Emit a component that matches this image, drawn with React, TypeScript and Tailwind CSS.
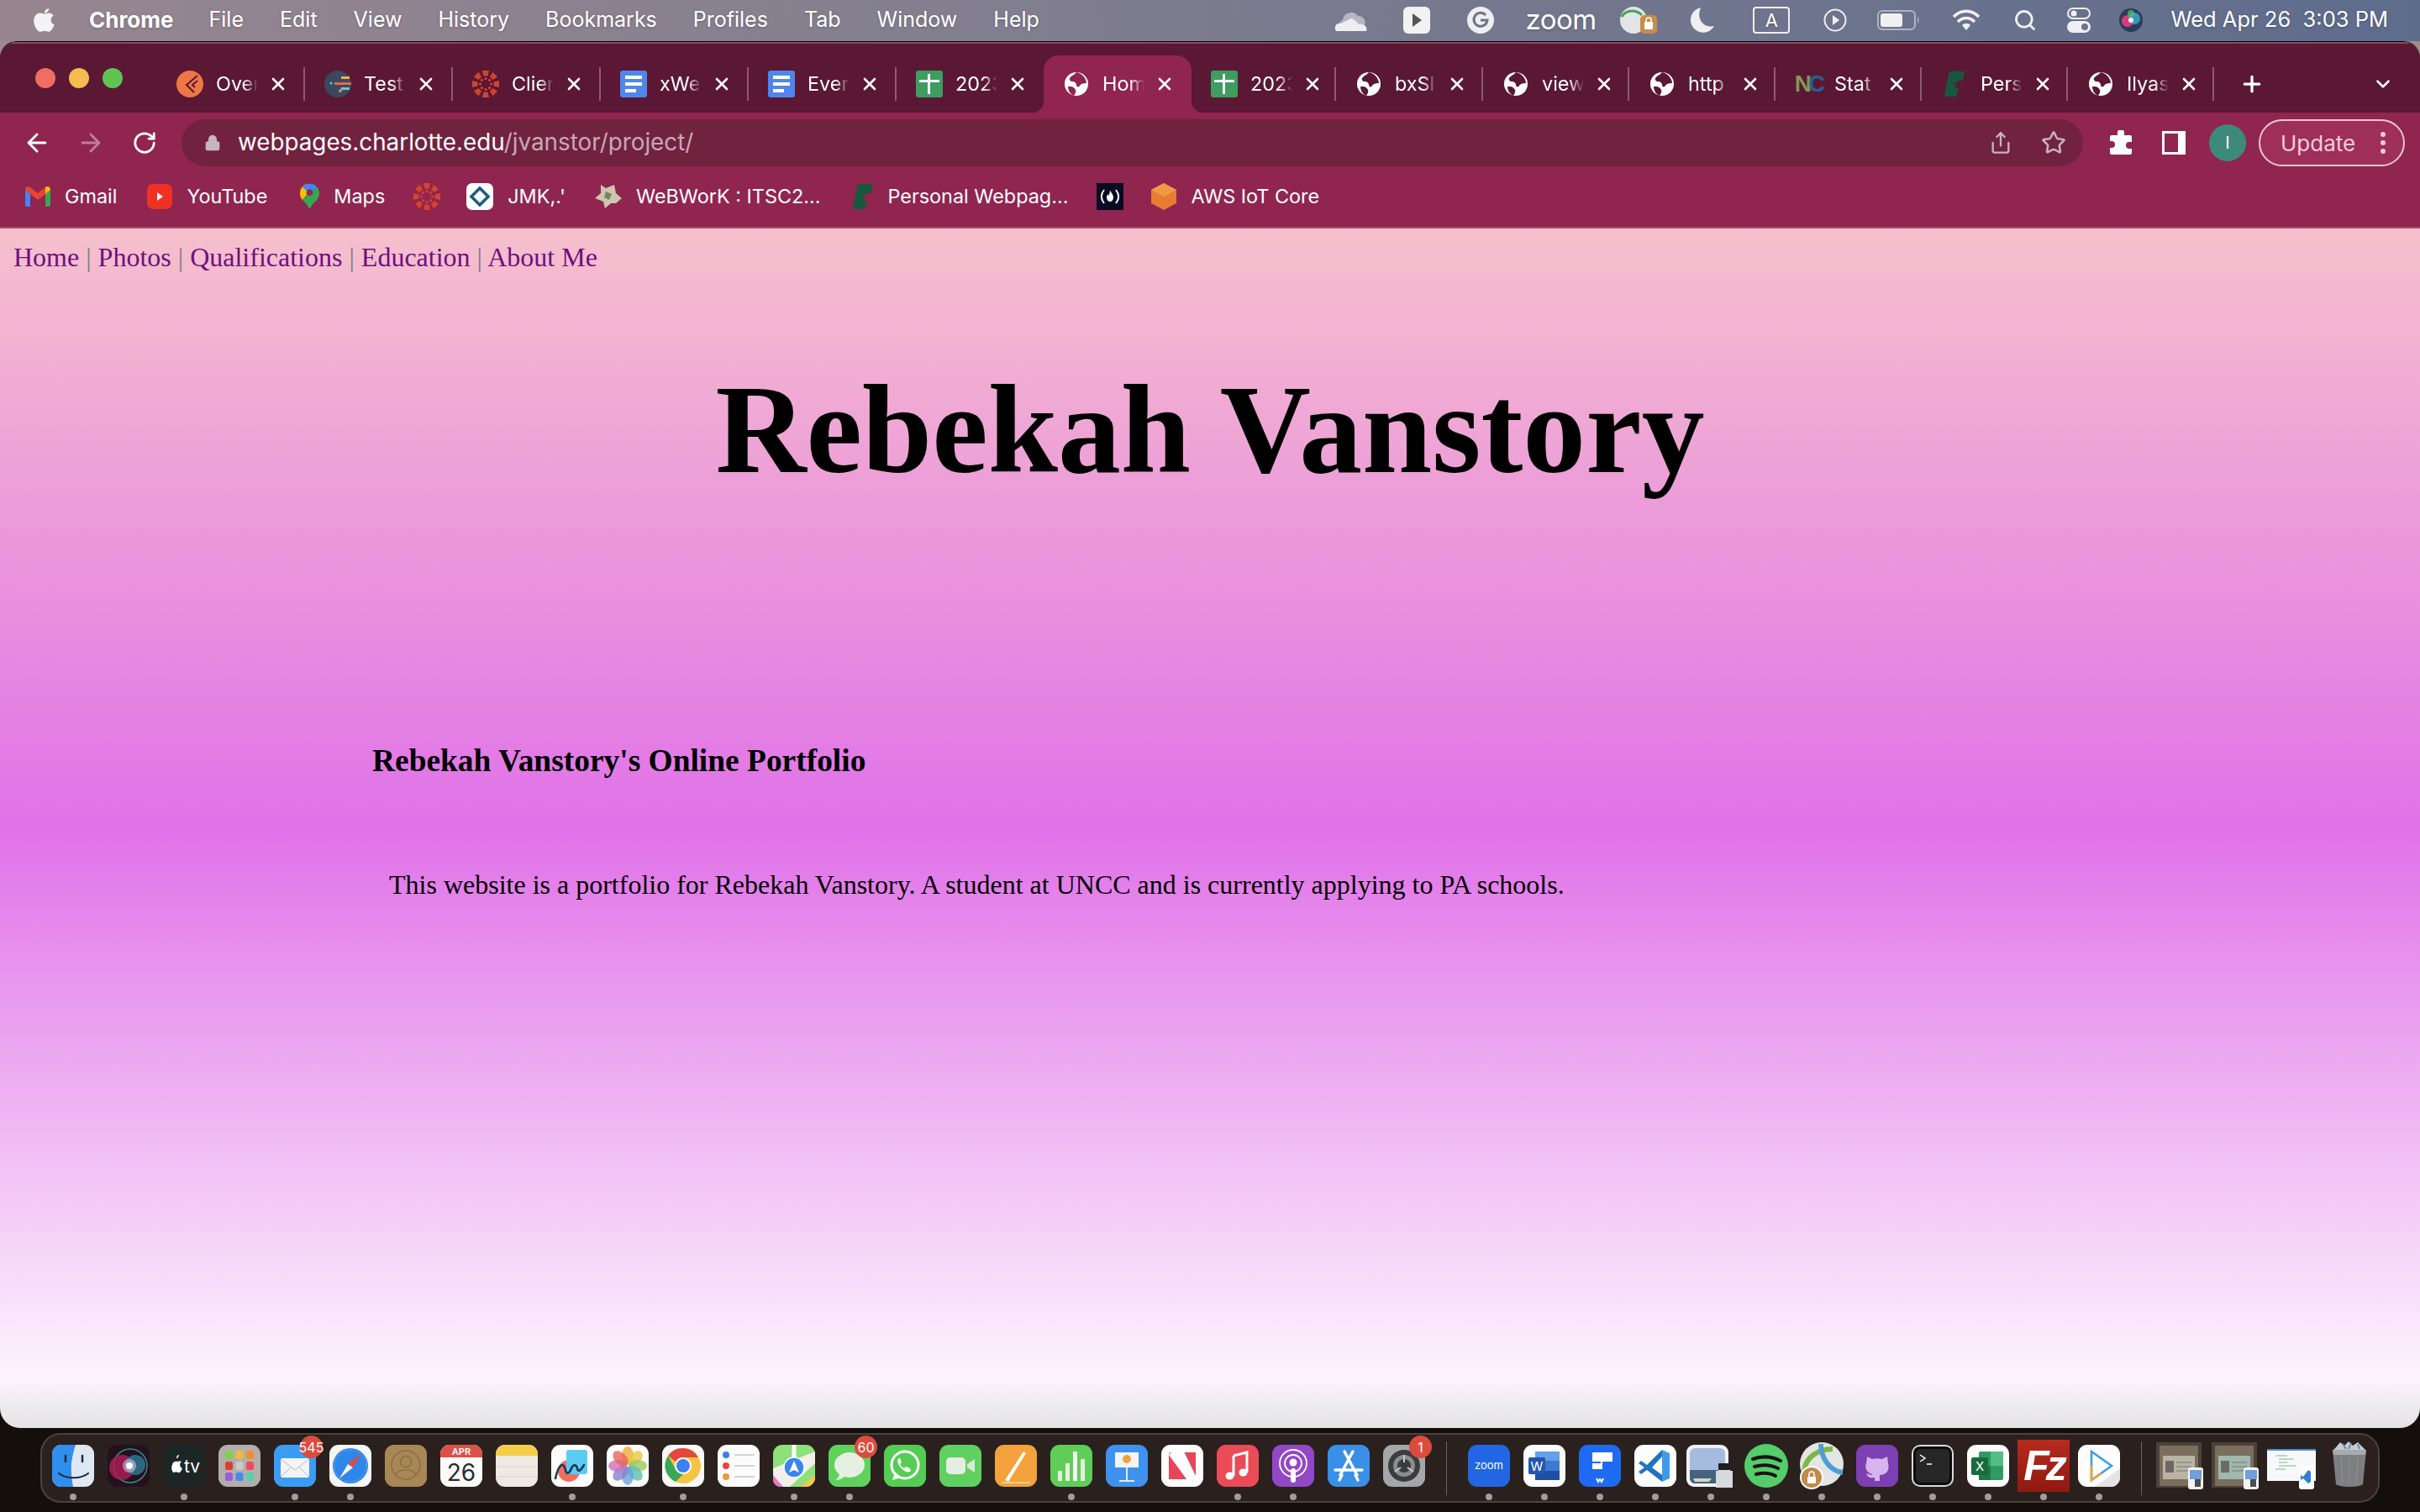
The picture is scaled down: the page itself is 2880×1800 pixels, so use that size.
import type { ReactNode } from "react";
import { ArrowLeft, ArrowRight, ChevronDown, Lock, Plus, RotateCw, Search, Share, Star, X } from "lucide-react";

const serif = "font-['Liberation_Serif','Times_New_Roman',serif]";

// ---------- favicons ----------
function Globe() {
  return (
    <svg viewBox="0 0 32 32" className="w-[32px] h-[32px]">
      <circle cx="16" cy="16" r="14" fill="#fff" />
      <path d="M16 2c-2 3-6 4-8 7-1 2 1 4 3 4 3 0 5 2 5 4 0 3 3 3 4 1 2-3 6-3 8-3 0-5-5-12-12-13z" fill="#5a1835" />
      <path d="M9 19c3 0 5 2 6 4 1 3-1 5-2 7-4-2-7-6-7-11z" fill="#5a1835" />
    </svg>
  );
}

function ActiveGlobe() {
  return (
    <svg viewBox="0 0 32 32" className="w-[32px] h-[32px]">
      <circle cx="16" cy="16" r="14" fill="#fff" />
      <path d="M16 2c-2 3-6 4-8 7-1 2 1 4 3 4 3 0 5 2 5 4 0 3 3 3 4 1 2-3 6-3 8-3 0-5-5-12-12-13z" fill="#90254f" />
      <path d="M9 19c3 0 5 2 6 4 1 3-1 5-2 7-4-2-7-6-7-11z" fill="#90254f" />
    </svg>
  );
}

function Orange() {
  return (
    <svg viewBox="0 0 32 32" className="w-[32px] h-[32px]">
      <circle cx="16" cy="16" r="16" fill="#ee7744" />
      <path d="M25 6 12 17l9 9M25 12l-6 5 3 3" fill="none" stroke="#5a1835" strokeWidth="2" />
    </svg>
  );
}

function TestIcon() {
  return (
    <svg viewBox="0 0 32 32" className="w-[32px] h-[32px]">
      <circle cx="16" cy="16" r="16" fill="#3a4860" />
      <rect x="20" y="7" width="10" height="3" fill="#f0b040" />
      <rect x="12" y="14" width="20" height="3" fill="#e8684a" />
      <rect x="20" y="20" width="10" height="3" fill="#70c8c8" />
      <circle cx="8" cy="15" r="1.5" fill="#70c8c8" />
      <circle cx="19" cy="24" r="2" fill="#e8884a" />
    </svg>
  );
}

function CanvasIcon({ size = "w-[32px] h-[32px]" }: { size?: string }) {
  const spokes = [0, 45, 90, 135, 180, 225, 270, 315];
  return (
    <svg viewBox="0 0 32 32" className={size}>
      {spokes.map((a) => (
        <g key={a} transform={`rotate(${a} 16 16)`}>
          <path d="M12 0h8l-1.5 6.5h-5z" fill="#d2452c" />
          <circle cx="16" cy="9.5" r="1.6" fill="#d2452c" />
        </g>
      ))}
    </svg>
  );
}

function DocsIcon() {
  return (
    <svg viewBox="0 0 32 32" className="w-[32px] h-[32px]">
      <rect width="32" height="32" rx="3" fill="#4f86ec" />
      <rect x="6" y="6" width="20" height="4" fill="#fff" />
      <rect x="6" y="14" width="20" height="4" fill="#fff" />
      <rect x="6" y="22" width="13" height="4" fill="#fff" />
    </svg>
  );
}

function SheetsIcon() {
  return (
    <svg viewBox="0 0 32 32" className="w-[32px] h-[32px]">
      <rect width="32" height="32" rx="3" fill="#3f9d5f" />
      <rect x="4" y="11" width="24" height="3" fill="#fff" />
      <rect x="14" y="4" width="3" height="24" fill="#fff" />
    </svg>
  );
}

function CharlotteIcon({ size = "w-[24px] h-[30px]" }: { size?: string }) {
  return (
    <svg viewBox="0 0 24 30" className={size}>
      <path d="M6 0h18l-2 11h-5l-7 5h5l-3 4h5l-3 10H2c-2 0-2-2-2-3z" fill="#17583c" />
    </svg>
  );
}

// ---------- tabs ----------
const tabs: { title: string; icon: ReactNode; w: string; active?: boolean; sep?: boolean }[] = [
  { title: "Over", icon: <Orange />, w: "w-[176px]", sep: true },
  { title: "Test", icon: <TestIcon />, w: "w-[176px]", sep: true },
  { title: "Clier", icon: <CanvasIcon />, w: "w-[176px]", sep: true },
  { title: "xWe", icon: <DocsIcon />, w: "w-[176px]", sep: true },
  { title: "Ever", icon: <DocsIcon />, w: "w-[176px]", sep: true },
  { title: "2023", icon: <SheetsIcon />, w: "w-[175px]" },
  { title: "Hom", icon: <ActiveGlobe />, w: "w-[176px]", active: true },
  { title: "2023", icon: <SheetsIcon />, w: "w-[172px]", sep: true },
  { title: "bxSl", icon: <Globe />, w: "w-[175px]", sep: true },
  { title: "view", icon: <Globe />, w: "w-[174px]", sep: true },
  { title: "http", icon: <Globe />, w: "w-[174px]", sep: true },
  {
    title: "Stat",
    icon: (
      <span className="font-['Liberation_Sans',sans-serif] font-bold text-[28px] tracking-[-4px] leading-[32px]">
        <span className="text-[#7f9a50]">N</span>
        <span className="text-[#2a5f8f]">C</span>
      </span>
    ),
    w: "w-[174px]",
    sep: true,
  },
  { title: "Pers", icon: <CharlotteIcon />, w: "w-[174px]", sep: true },
  { title: "Ilyas", icon: <Globe />, w: "w-[174px]", sep: true },
];

function Tab({ title, icon, w, active, sep }: (typeof tabs)[number]) {
  return (
    <div className={`relative flex items-center h-[68px] pl-[23px] shrink-0 ${w} ${active ? "bg-[#90254f] rounded-t-[18px]" : ""}`}>
      {active && (
        <>
          <span className="absolute bottom-0 -left-[14px] w-[14px] h-[14px] bg-[radial-gradient(circle_at_0_0,transparent_14px,#90254f_14.5px)]" />
          <span className="absolute bottom-0 -right-[14px] w-[14px] h-[14px] bg-[radial-gradient(circle_at_100%_0,transparent_14px,#90254f_14.5px)]" />
        </>
      )}
      <div className="flex w-[32px] h-[32px] shrink-0 items-center justify-center">{icon}</div>
      <div className="ml-[15px] w-[50px] overflow-hidden whitespace-nowrap text-[23.4px] text-white [mask-image:linear-gradient(to_right,black_65%,transparent)]">
        {title}
      </div>
      <X className="ml-[12px] w-[24px] h-[24px] shrink-0 text-white" strokeWidth={2.6} />
      {sep && <span className="ml-auto w-[2px] h-[40px] bg-[#8f5a73]" />}
    </div>
  );
}

// ---------- bookmarks ----------
function GmailIcon() {
  return (
    <svg viewBox="0 0 30 24" className="w-[30px] h-[24px]">
      <path d="M0 4v18c0 1 1 2 2 2h4V9z" fill="#4285f4" />
      <path d="M30 4v18c0 1-1 2-2 2h-4V9z" fill="#34a853" />
      <path d="M0 4c0-4 4-5 6-3l9 7 9-7c2-2 6-1 6 3l-6 5-9 7-9-7z" fill="#ea4335" />
      <path d="M24 1c2-2 6-1 6 3l-6 5z" fill="#fbbc04" />
    </svg>
  );
}

function YoutubeIcon() {
  return (
    <svg viewBox="0 0 30 32" className="w-[30px] h-[32px]">
      <rect y="1" width="30" height="30" rx="7" fill="#ee3124" />
      <path d="M12 11l7 5-7 5z" fill="#fff" />
    </svg>
  );
}

function MapsIcon() {
  return (
    <svg viewBox="0 0 24 32" className="w-[23px] h-[32px]">
      <path d="M12 0C5 0 0 5 0 12c0 3 1 6 3 8l9-10z" fill="#fbbc04" />
      <path d="M21 4c2 2 3 5 3 8 0 3-1 5-3 8l-9 8-9-8 9-8z" fill="#34a853" />
      <path d="M12 0C8 0 5 2 3 4l9 8 9-8c-2-3-5-4-9-4z" fill="#4285f4" />
      <path d="M3 20c4 4 7 7 9 12 2-5 5-8 9-12L12 12z" fill="#34a853" />
      <circle cx="12" cy="11" r="4" fill="#8a2d4a" />
    </svg>
  );
}

function JmkIcon() {
  return (
    <svg viewBox="0 0 32 32" className="w-[32px] h-[32px]">
      <rect width="32" height="32" rx="7" fill="#fff" />
      <path d="M16 6 26 16 16 26 6 16z" fill="none" stroke="#1f5c80" strokeWidth="3.6" />
    </svg>
  );
}

function WebworkIcon() {
  return (
    <svg viewBox="0 0 32 32" className="w-[32px] h-[32px]">
      <path d="M7 2l6 4 10-4 2 10 7 6-7 6-6 0-7 6-2-8-10-4 7-6z" fill="#c9c7ad" />
      <path d="M13 10l7 3-3 7-6-3z" fill="#7d8368" />
    </svg>
  );
}

function FreeCodeIcon() {
  return (
    <div className="flex w-[32px] h-[32px] items-center justify-center bg-[#0a0a23] text-white">
      <svg viewBox="0 0 32 32" className="w-[32px] h-[32px]">
        <path d="M9 8c-4 5-4 11 0 16M23 8c4 5 4 11 0 16" fill="none" stroke="#fff" strokeWidth="2" />
        <path d="M16 8c1 4 4 5 4 9 0 3-2 5-4 5s-4-2-4-5c0-2 1-3 2-4 0 2 1 2 1 1s1-3 1-6z" fill="#fff" />
      </svg>
    </div>
  );
}

function AwsIcon() {
  return (
    <svg viewBox="0 0 30 32" className="w-[30px] h-[32px]">
      <path d="M15 0 30 8v16l-15 8L0 24V8z" fill="#e87c32" />
      <path d="M15 0 30 8 15 16 0 8z" fill="#f09a48" />
    </svg>
  );
}

const bookmarks: { label?: string; icon: ReactNode; ml: string }[] = [
  { label: "Gmail", icon: <GmailIcon />, ml: "ml-[30px]" },
  { label: "YouTube", icon: <YoutubeIcon />, ml: "ml-[36px]" },
  { label: "Maps", icon: <MapsIcon />, ml: "ml-[39px]" },
  { icon: <CanvasIcon />, ml: "ml-[34px]" },
  { label: "JMK,.'", icon: <JmkIcon />, ml: "ml-[31px]" },
  { label: "WeBWorK : ITSC2...", icon: <WebworkIcon />, ml: "ml-[35px]" },
  { label: "Personal Webpag...", icon: <CharlotteIcon />, ml: "ml-[39px]" },
  { icon: <FreeCodeIcon />, ml: "ml-[34px]" },
  { label: "AWS IoT Core", icon: <AwsIcon />, ml: "ml-[33px]" },
];

// ---------- dock ----------
function DockCell({ dot, badge, children }: { dot?: boolean; badge?: string; children: ReactNode }) {
  return (
    <div className="flex flex-col items-center w-[66px] shrink-0">
      <div className="relative flex w-[50px] h-[50px] items-center justify-center">
        {children}
        {badge && (
          <span className="absolute -top-[11px] -right-[8px] flex w-[27px] h-[27px] items-center justify-center rounded-full bg-[#dc4b3e] text-[16px] text-white">
            {badge}
          </span>
        )}
      </div>
      <span className={`mt-[8px] w-[8px] h-[8px] rounded-full ${dot ? "bg-[#a39c9a]" : ""}`} />
    </div>
  );
}

function Tile({ bg, children }: { bg: string; children?: ReactNode }) {
  return (
    <svg viewBox="0 0 50 50" className="w-[50px] h-[50px]">
      <rect width="50" height="50" rx="11" fill={bg} />
      {children}
    </svg>
  );
}

const petals = [0, 45, 90, 135, 180, 225, 270, 315];
const petalColors = ["#f0a93c", "#e6c93f", "#9ccb5a", "#5dc0b5", "#6aa0dc", "#8a7fd0", "#c774b8", "#e8645a"];

const dockLeft: { name: string; dot?: boolean; badge?: string; icon: ReactNode }[] = [
  {
    name: "finder",
    dot: true,
    icon: (
      <Tile bg="#dfe8f2">
        <path d="M11 0h17c-4 12-6 24-5 34 0 3 1 10 2 16H11C5 50 0 45 0 39V11C0 5 5 0 11 0z" fill="#2f8ef0" />
        <path d="M16 13v7M36 13v7" stroke="#1c2b40" strokeWidth="2.5" strokeLinecap="round" />
        <path d="M8 34c9 7 26 7 35 0" fill="none" stroke="#1c2b40" strokeWidth="2.2" strokeLinecap="round" />
      </Tile>
    ),
  },
  {
    name: "siri",
    icon: (
      <Tile bg="#24101f">
        <circle cx="27" cy="25" r="20" fill="none" stroke="#2e8f84" strokeWidth="1.5" />
        <circle cx="17" cy="27" r="15" fill="#a81e55" opacity="0.85" />
        <circle cx="33" cy="24" r="12" fill="#2f8fa8" opacity="0.7" />
        <circle cx="26" cy="25" r="8" fill="#c9c2e0" opacity="0.6" />
        <circle cx="26" cy="25" r="4" fill="#fdfcff" />
      </Tile>
    ),
  },
  {
    name: "tv",
    dot: true,
    icon: (
      <Tile bg="#1c2624">
        <path d="M17 16c1-1 2-3 2-4-2 0-3 2-3 4zM11 24c0-4 5-5 6-4 1 0 3-1 5 0-3 2-2 7 1 8-1 3-3 6-5 5-2-1-3-1-5 0-2 0-4-6-2-9z" fill="#fff" />
        <text x="25" y="33" fill="#fff" fontSize="21" fontFamily="Inter, sans-serif">tv</text>
      </Tile>
    ),
  },
  {
    name: "launchpad",
    icon: (
      <Tile bg="#b3aeac">
        {["#7cd34f", "#f2b93a", "#ef8f33", "#df3d30", "#c9c9c9", "#ee4c5c", "#9d5be0", "#3f8cf0", "#59d0b0"].map((c, i) => (
          <rect key={i} x={8 + (i % 3) * 12.5} y={7 + Math.floor(i / 3) * 13} width="9" height="10" rx="2.5" fill={c} />
        ))}
      </Tile>
    ),
  },
  {
    name: "mail",
    dot: true,
    badge: "545",
    icon: (
      <Tile bg="#3a9cf4">
        <rect x="8" y="16" width="34" height="23" rx="2" fill="#f4f4f6" />
        <path d="M8 17l17 13 17-13M8 38l13-12M42 38 29 26" fill="none" stroke="#b5b9c0" strokeWidth="1" />
      </Tile>
    ),
  },
  {
    name: "safari",
    dot: true,
    icon: (
      <Tile bg="#f5f5f5">
        <circle cx="25" cy="25" r="21" fill="#2e86e8" />
        <circle cx="25" cy="25" r="19" fill="none" stroke="#bcdcf8" strokeWidth="0.8" strokeDasharray="1 2" />
        <path d="M38 10 22 23l6 4z" fill="#e8453c" />
        <path d="M12 40l16-13-6-4z" fill="#f4f4f4" />
      </Tile>
    ),
  },
  {
    name: "contacts",
    icon: (
      <Tile bg="#a98655">
        <circle cx="25" cy="24" r="17" fill="none" stroke="#8c6e45" strokeWidth="1.5" />
        <circle cx="25" cy="20" r="6.5" fill="none" stroke="#8c6e45" strokeWidth="1.5" />
        <path d="M13 36c3-8 21-8 24 0" fill="none" stroke="#8c6e45" strokeWidth="1.5" />
      </Tile>
    ),
  },
  {
    name: "calendar",
    icon: (
      <svg viewBox="0 0 50 50" className="w-[50px] h-[50px]">
        <rect width="50" height="50" rx="11" fill="#fbfbfb" />
        <path d="M0 15V11C0 5 5 0 11 0h28c6 0 11 5 11 11v4z" fill="#dc5147" />
        <text x="25" y="12" textAnchor="middle" fill="#fff" fontSize="11" fontWeight="600" fontFamily="Inter, sans-serif">APR</text>
        <text x="25" y="43" textAnchor="middle" fill="#2b2b2b" fontSize="28" fontFamily="Inter, sans-serif">26</text>
      </svg>
    ),
  },
  {
    name: "notes",
    icon: (
      <Tile bg="#eeeae2">
        <path d="M0 13V11C0 5 5 0 11 0h28c6 0 11 5 11 11v2z" fill="#f6cd47" />
        <path d="M0 26h50M0 38h50" stroke="#d9d5cd" strokeWidth="1" />
      </Tile>
    ),
  },
  {
    name: "freeform",
    dot: true,
    icon: (
      <Tile bg="#fdfdfd">
        <circle cx="21" cy="31" r="13" fill="#ef6f5c" />
        <rect x="18" y="6" width="25" height="29" rx="3" fill="#5ccbf2" />
        <path d="M5 40c4-18 10-20 12-10 1 6 5 4 7-2 2-5 6-5 7 0s4 3 8-4" fill="none" stroke="#173a5c" strokeWidth="2.6" strokeLinecap="round" />
      </Tile>
    ),
  },
  {
    name: "photos",
    icon: (
      <Tile bg="#fdfdfd">
        {petals.map((a, i) => (
          <ellipse key={a} cx="25" cy="13" rx="7" ry="11" fill={petalColors[i]} opacity="0.8" transform={`rotate(${a} 25 25)`} />
        ))}
      </Tile>
    ),
  },
  {
    name: "chrome",
    dot: true,
    icon: (
      <Tile bg="#f8f8f8">
        <circle cx="25" cy="25" r="21" fill="#f5c542" />
        <path d="M25 4a21 21 0 0 1 18 11H25a10 10 0 0 0-9 5L7 13A21 21 0 0 1 25 4z" fill="#e5473a" />
        <path d="M7 13l9 16a10 10 0 0 0 9 6l-9 9A21 21 0 0 1 7 13z" fill="#3aa757" />
        <circle cx="25" cy="25" r="10" fill="#fff" />
        <circle cx="25" cy="25" r="8" fill="#3b82f0" />
      </Tile>
    ),
  },
  {
    name: "reminders",
    icon: (
      <Tile bg="#fbfbfb">
        <circle cx="10" cy="12" r="4" fill="#3a7ff0" />
        <circle cx="10" cy="25" r="4" fill="#e8453c" />
        <circle cx="10" cy="38" r="4" fill="#ef9a33" />
        <path d="M20 12h24M20 25h24M20 38h24" stroke="#d3d3d3" strokeWidth="2" />
      </Tile>
    ),
  },
  {
    name: "maps",
    dot: true,
    icon: (
      <Tile bg="#8ee07a">
        <path d="M0 28 50 8v14L20 50H11C5 50 0 45 0 39z" fill="#f2f0e8" />
        <path d="M0 36 12 50H8c-4 0-8-4-8-8z" fill="#e27cc4" />
        <path d="M32 50l18-14v3c0 6-5 11-11 11z" fill="#f4c94a" />
        <circle cx="25" cy="27" r="12" fill="#3a86ee" stroke="#fff" strokeWidth="1.5" />
        <path d="M25 19l6 14-6-3-6 3z" fill="#fff" />
        <rect x="22.5" y="0" width="5" height="15" fill="#fff" />
      </Tile>
    ),
  },
  {
    name: "messages",
    dot: true,
    badge: "60",
    icon: (
      <Tile bg="#5fd25c">
        <ellipse cx="25" cy="24" rx="18" ry="15" fill="#e6f0e2" />
        <path d="M13 33c0 5-2 7-5 9 5 0 9-2 12-5z" fill="#e6f0e2" />
      </Tile>
    ),
  },
  {
    name: "whatsapp",
    icon: (
      <Tile bg="#55cd55">
        <circle cx="25" cy="24" r="16" fill="none" stroke="#fff" strokeWidth="3" />
        <path d="M10 42l3-10 7 7z" fill="#fff" />
        <path d="M18 16c-3 2-2 6 2 11s9 7 12 4l-1-3-5-2-2 2c-2-1-4-3-5-5l2-2-2-5z" fill="#fff" />
      </Tile>
    ),
  },
  {
    name: "facetime",
    icon: (
      <Tile bg="#5fd160">
        <rect x="8" y="15" width="23" height="20" rx="5" fill="#e6ece2" />
        <path d="M33 23l9-6v16l-9-6z" fill="#dce8d8" />
      </Tile>
    ),
  },
  {
    name: "pages",
    icon: (
      <Tile bg="#f4a23c">
        <path d="M12 42 34 8l3 2-21 34z" fill="#fbfbf7" />
        <path d="M8 45h34" stroke="#fbdca8" strokeWidth="1.5" />
      </Tile>
    ),
  },
  {
    name: "numbers",
    dot: true,
    icon: (
      <Tile bg="#5fce58">
        <rect x="9" y="31" width="5" height="12" fill="#e4f0df" />
        <rect x="18" y="22" width="5" height="21" fill="#e4f0df" />
        <rect x="27" y="8" width="5" height="35" fill="#f1f5ee" />
        <rect x="36" y="17" width="5" height="26" fill="#e4f0df" />
      </Tile>
    ),
  },
  {
    name: "keynote",
    icon: (
      <Tile bg="#3f92ee">
        <rect x="11" y="9" width="28" height="18" fill="#f4f4f4" />
        <circle cx="25" cy="17" r="5" fill="#e8a53c" />
        <path d="M25 27v15M16 43h18" stroke="#e8e8e8" strokeWidth="2" />
      </Tile>
    ),
  },
  {
    name: "news",
    icon: (
      <Tile bg="#fdfdfd">
        <rect x="9" y="9" width="32" height="32" rx="3" fill="#e8455a" />
        <path d="M15 6h11l16 33v6H33L9 12z" fill="#fdfdfd" />
        <path d="M9 17v24h11zM41 33V9H30z" fill="#e8455a" />
      </Tile>
    ),
  },
  {
    name: "music",
    dot: true,
    icon: (
      <Tile bg="#e94b57">
        <path d="M20 13 36 9v24" fill="none" stroke="#fff" strokeWidth="3" />
        <path d="M20 13v24" stroke="#fff" strokeWidth="3" />
        <ellipse cx="15.5" cy="37" rx="5" ry="4.5" fill="#fff" />
        <ellipse cx="31.5" cy="33" rx="5" ry="4.5" fill="#fff" />
      </Tile>
    ),
  },
  {
    name: "podcasts",
    dot: true,
    icon: (
      <Tile bg="#9248c6">
        <circle cx="25" cy="22" r="16" fill="none" stroke="#fff" strokeWidth="1.8" />
        <circle cx="25" cy="22" r="10" fill="none" stroke="#fff" strokeWidth="1.8" />
        <circle cx="25" cy="21" r="4.5" fill="#fff" />
        <rect x="22" y="28" width="6" height="17" rx="3" fill="#fff" />
      </Tile>
    ),
  },
  {
    name: "appstore",
    icon: (
      <Tile bg="#3a8fe6">
        <path d="M20 8l15 28M30 8 15 36M9 30h32M14 42l3-6M36 42l-3-6" stroke="#fff" strokeWidth="3.4" strokeLinecap="round" />
      </Tile>
    ),
  },
  {
    name: "settings",
    badge: "1",
    icon: (
      <Tile bg="#a4a7a9">
        <circle cx="25" cy="25" r="19" fill="#3c3c3e" />
        <circle cx="25" cy="25" r="13" fill="#8b8d90" />
        <circle cx="25" cy="25" r="8" fill="#3c3c3e" />
        <path d="M25 12v9M14 32l7-5M36 32l-7-5" stroke="#c9c9cb" strokeWidth="2" />
      </Tile>
    ),
  },
];

const dockRight: { name: string; icon: ReactNode }[] = [
  {
    name: "zoom",
    icon: (
      <Tile bg="#2266e3">
        <text x="25" y="29" textAnchor="middle" fill="#fff" fontSize="13" fontFamily="Inter, sans-serif">zoom</text>
      </Tile>
    ),
  },
  {
    name: "word",
    icon: (
      <Tile bg="#fdfdfd">
        <rect x="14" y="8" width="29" height="34" rx="2" fill="#3f78cf" />
        <rect x="14" y="8" width="29" height="11" fill="#62a0e8" />
        <rect x="14" y="31" width="29" height="11" fill="#1f4fa0" />
        <rect x="6" y="15" width="20" height="20" rx="2" fill="#2456ae" />
        <text x="16" y="31" textAnchor="middle" fill="#fff" fontSize="15" fontFamily="Inter, sans-serif">W</text>
      </Tile>
    ),
  },
  {
    name: "wondershare",
    icon: (
      <Tile bg="#1f6af2">
        <path d="M16 9h24v11H28v9H16z" fill="#fff" />
        <path d="M16 22h10v-2H16z" fill="#1f6af2" />
        <path d="M21 40l2 4 2-3 2 3 2-4" fill="none" stroke="#fff" strokeWidth="2" />
      </Tile>
    ),
  },
  {
    name: "vscode",
    icon: (
      <Tile bg="#fdfdfd">
        <path d="M33 6l9 4v30l-9 4z" fill="#3f9be8" />
        <path d="M33 6 15 24 8 19l-3 3 7 5-7 5 3 3 7-5 18 14v-8L21 27 33 14z" fill="#1f72c4" />
      </Tile>
    ),
  },
  {
    name: "preview",
    icon: (
      <div className="relative w-[58px] h-[50px] shrink-0">
        <svg viewBox="0 0 58 52" className="w-[58px] h-[52px]">
          <rect width="50" height="50" rx="9" fill="#f2f2f2" />
          <rect x="4" y="4" width="42" height="42" rx="6" fill="#a5bcdf" />
          <path d="M4 30h42v10c0 3-3 6-6 6H10c-3 0-6-3-6-6z" fill="#45627f" />
          <path d="M8 40h22l-3 4H10z" fill="#d8d3c8" />
          <path d="M38 27h14v4H38zM35 31h20v20H35z" fill="#d7dbe0" />
          <rect x="38" y="22" width="14" height="8" rx="1" fill="#1f1f21" />
        </svg>
      </div>
    ),
  },
  {
    name: "spotify",
    icon: (
      <svg viewBox="0 0 52 52" className="w-[52px] h-[52px] shrink-0">
        <circle cx="26" cy="26" r="26" fill="#54cd6a" />
        <path d="M10 18c11-4 23-3 33 2M12 27c10-3 20-2 28 2M14 36c8-2 16-2 23 2" fill="none" stroke="#191414" strokeWidth="4" strokeLinecap="round" />
      </svg>
    ),
  },
  {
    name: "cisco",
    icon: (
      <svg viewBox="0 0 54 56" className="w-[54px] h-[56px] shrink-0">
        <circle cx="27" cy="26" r="26" fill="#e4e6e4" />
        <path d="M6 34C8 18 22 8 40 8" fill="none" stroke="#7ab648" strokeWidth="6" />
        <path d="M26 2c0 16 10 32 26 34" fill="none" stroke="#4d9ed8" strokeWidth="6" />
        <circle cx="15" cy="42" r="13" fill="#c08a48" stroke="#fff" strokeWidth="2" />
        <rect x="10" y="41" width="10" height="8" rx="1" fill="#fff" />
        <path d="M12 41v-3a3 3 0 0 1 6 0v3" fill="none" stroke="#fff" strokeWidth="1.6" />
      </svg>
    ),
  },
  {
    name: "github",
    icon: (
      <Tile bg="#7d3fb2">
        <path d="M13 14l6 3c4-1 8-1 12 0l6-3 1 8c2 7-1 14-10 14v7h-6v-4c-5 1-8 0-10-5 3 1 5 2 7 2v-1c-7-2-9-8-7-13z" fill="#d8b5ec" />
      </Tile>
    ),
  },
  {
    name: "terminal",
    icon: (
      <svg viewBox="0 0 50 50" className="w-[50px] h-[50px]">
        <rect width="50" height="50" rx="10" fill="#d6dcdd" />
        <rect x="2" y="2" width="46" height="46" rx="8" fill="#0b0b0b" />
        <rect x="5" y="5" width="40" height="40" rx="5" fill="#272727" />
        <path d="M10 12l6 4-6 4M18 23h6" fill="none" stroke="#fff" strokeWidth="1.4" />
      </svg>
    ),
  },
  {
    name: "excel",
    icon: (
      <Tile bg="#fdfdfd">
        <rect x="14" y="8" width="29" height="34" rx="2" fill="#2f9a62" />
        <rect x="28" y="8" width="15" height="17" fill="#54bd82" />
        <rect x="14" y="25" width="14" height="17" fill="#1e7a48" />
        <rect x="5" y="15" width="20" height="21" rx="2" fill="#176b3c" />
        <text x="15" y="31" textAnchor="middle" fill="#fff" fontSize="15" fontFamily="Inter, sans-serif">X</text>
      </Tile>
    ),
  },
  {
    name: "filezilla",
    icon: (
      <div className="relative flex w-[62px] h-[62px] shrink-0 items-center justify-center bg-[linear-gradient(#b82a1e,#8e1a12)] [font-family:'Liberation_Sans',sans-serif] text-[50px] font-bold italic leading-none tracking-[-4px] text-white">
        Fz
      </div>
    ),
  },
  {
    name: "infuse",
    icon: (
      <Tile bg="#fdfdfd">
        <path d="M50 28v11c0 6-5 11-11 11H20z" fill="#e4e4e4" />
        <path d="M16 8l24 17-24 17z" fill="none" stroke="#3aa0dc" strokeWidth="2.6" />
        <path d="M16 25v17l12-8" fill="none" stroke="#e8a53c" strokeWidth="2.6" />
      </Tile>
    ),
  },
];

// photographed ID cards lying in the dock's stack area
function PhotoThumb({ paper }: { paper: string }) {
  return (
    <svg viewBox="0 0 58 56" className="w-[58px] h-[56px] shrink-0">
      <rect width="54" height="54" fill="#4a4238" />
      <rect x="4" y="4" width="46" height="48" fill="#7c6e5c" />
      <rect x="8" y="16" width="38" height="28" fill={paper} />
      <rect x="11" y="22" width="10" height="14" fill="#6d6a66" />
      <path d="M24 24h18M24 29h18M24 34h14" stroke="#8d8a80" strokeWidth="1.4" />
      <rect x="38" y="30" width="18" height="26" rx="3" fill="#f1f3f6" />
      <rect x="40" y="33" width="14" height="11" fill="#6f9fdc" />
      <rect x="46" y="44" width="7" height="9" fill="#4d4d4f" />
    </svg>
  );
}

function CodeThumb() {
  return (
    <svg viewBox="0 0 58 56" className="w-[58px] h-[56px] shrink-0">
      <rect y="8" width="58" height="38" fill="#f6f8fb" />
      <rect y="8" width="58" height="2" fill="#4f8fd8" />
      <path d="M10 16h14M14 20h18M14 24h10M14 28h20M10 32h12" stroke="#7ab88a" strokeWidth="1" />
      <rect x="38" y="28" width="18" height="28" rx="3" fill="#fdfdfd" />
      <path d="M49 33l3 2v12l-3 2-6-6-3 2v-6l3 2z" fill="#2f7fd0" />
    </svg>
  );
}

function Trash() {
  return (
    <svg viewBox="0 0 44 56" className="ml-[5px] -mt-[4px] w-[44px] h-[56px] shrink-0">
      <path d="M6 8l5-6 5 4 5-5 5 5 6-4 6 6 4 4H2z" fill="#c8cbd0" />
      <path d="M14 4l4 6M24 3l-3 7M32 4l2 6" stroke="#5a8fc0" strokeWidth="2" />
      <path d="M2 11h40l-4 41c-4 4-28 4-32 0z" fill="#7d7f83" />
      <path d="M2 11h40l-1 6H3z" fill="#a8aaae" />
      <path d="M12 18l2 32M22 18v33M32 18l-2 32" stroke="#909296" strokeWidth="1" />
    </svg>
  );
}

function MenuBar() {
  const items = ["File", "Edit", "View", "History", "Bookmarks", "Profiles", "Tab", "Window", "Help"];
  return (
    <header className="flex h-[49px] shrink-0 items-center justify-between bg-[linear-gradient(to_right,#978690,#85808f_35%,#5e6c8c)] pb-[2px] pl-[40px] pr-[38px] text-[25.5px] text-white [text-shadow:0_1px_3px_rgba(0,0,0,0.25)]">
      <div className="flex items-center">
        <svg viewBox="0 0 24 30" className="w-[26px] h-[32px] fill-[#f4f4f4]">
          <path d="M17 2c0 2-2 5-5 5 0-3 2-5 5-5zM12 8c1 0 3-1 5-1 2 0 4 1 5 3-4 2-4 8 1 10-1 3-4 8-6 8s-3-1-5-1-3 1-5 1c-3 0-7-7-7-12 0-6 4-9 7-9 2 0 4 1 5 1z" />
        </svg>
        <span className="ml-[40px] text-[26px] font-bold">Chrome</span>
        <nav className="ml-[42px] flex gap-[43px] text-[25px]">
          {items.map((m) => (
            <span key={m}>{m}</span>
          ))}
        </nav>
      </div>
      <div className="flex items-center">
        <svg viewBox="0 0 40 28" className="w-[40px] h-[28px]">
          <path d="M10 14a10 10 0 0 1 18-5A8 8 0 0 1 36 20H6a6 6 0 0 1 4-6z" fill="#b5b8c4" />
          <path d="M2 27c-3-5 0-10 6-9l12-6c6 2 8 6 9 7 6-1 11 3 9 8z" fill="#eeeef2" />
        </svg>
        <div className="ml-[42px] flex w-[32px] h-[32px] items-center justify-center rounded-[6px] bg-[#f2f2f2]">
          <span className="h-0 w-0 border-y-[8px] border-l-[11px] border-y-transparent border-l-[#555]" />
        </div>
        <svg viewBox="0 0 32 32" className="ml-[44px] w-[32px] h-[32px]">
          <circle cx="16" cy="16" r="16" fill="#efeff2" />
          <path d="M22 10a8 8 0 1 0 2 6h-8" fill="none" stroke="#6d7388" strokeWidth="3" />
        </svg>
        <span className="ml-[37px] w-[82px] text-center text-[33px] leading-none tracking-[-0.5px]">zoom</span>
        <svg viewBox="0 0 44 32" className="ml-[31px] w-[44px] h-[32px]">
          <circle cx="16" cy="16" r="16" fill="#e2e6e6" />
          <path d="M2 12C8 2 20 4 26 10" fill="none" stroke="#4aa05a" strokeWidth="3" />
          <rect x="24" y="10" width="20" height="22" rx="5" fill="#c98d4a" />
          <rect x="29" y="18" width="10" height="9" rx="1" fill="#fff" />
          <path d="M31 18v-2a3 3 0 0 1 6 0v2" fill="none" stroke="#fff" strokeWidth="1.5" />
        </svg>
        <svg viewBox="0 0 28 30" className="ml-[40px] w-[28px] h-[30px]">
          <path d="M12 0a15 15 0 1 0 16 22C16 25 6 14 12 0z" fill="#f0f0f2" />
        </svg>
        <div className="ml-[46px] flex w-[44px] h-[32px] items-center justify-center rounded-[4px] border-2 border-[#f0f0f2] text-[22px] leading-none">A</div>
        <svg viewBox="0 0 28 28" className="ml-[40px] w-[28px] h-[28px]">
          <circle cx="14" cy="14" r="12.5" fill="none" stroke="#f0f0f2" strokeWidth="2" />
          <path d="M11 8l8 6-8 6z" fill="#f0f0f2" />
        </svg>
        <svg viewBox="0 0 51 24" className="ml-[36px] w-[51px] h-[24px]">
          <rect x="1" y="1" width="44" height="22" rx="5" fill="none" stroke="#aeb4c2" strokeWidth="2" />
          <rect x="4" y="4" width="26" height="16" rx="3" fill="#f0f0f2" />
          <path d="M48 8c2 1 2 7 0 8z" fill="#aeb4c2" />
        </svg>
        <svg viewBox="0 0 34 26" className="ml-[38px] w-[34px] h-[26px]">
          <path d="M2 9c9-9 21-9 30 0M7 15c6-6 14-6 20 0" fill="none" stroke="#f0f0f2" strokeWidth="3.6" />
          <path d="M12 19c3-3 7-3 10 0l-5 6z" fill="#f0f0f2" />
        </svg>
        <Search className="ml-[39px] w-[28px] h-[28px] text-[#f0f0f2]" strokeWidth={2.4} />
        <svg viewBox="0 0 28 30" className="ml-[36px] w-[28px] h-[30px]">
          <rect x="1" y="1" width="26" height="12" rx="6" fill="none" stroke="#f0f0f2" strokeWidth="2" />
          <circle cx="8" cy="7" r="3.5" fill="#f0f0f2" />
          <rect y="16" width="28" height="14" rx="7" fill="#f0f0f2" />
          <circle cx="21" cy="23" r="4" fill="#6a7390" />
        </svg>
        <svg viewBox="0 0 28 28" className="ml-[34px] w-[28px] h-[28px]">
          <circle cx="14" cy="14" r="14" fill="#2c3c58" />
          <circle cx="10" cy="15" r="7" fill="#d83c78" />
          <circle cx="18" cy="12" r="7" fill="#3ab0c8" opacity="0.8" />
          <circle cx="14" cy="6" r="4" fill="#58c878" opacity="0.7" />
          <circle cx="14" cy="14" r="3" fill="#eee" />
        </svg>
        <span className="ml-[33px] whitespace-nowrap">Wed Apr 26&nbsp;&nbsp;3:03 PM</span>
      </div>
    </header>
  );
}

export default function App() {
  return (
    <div className="flex flex-col w-[2880px] h-[1800px] overflow-hidden bg-[linear-gradient(#a08c8c_80px,#140e0d_80px)] font-['Inter','Noto_Sans',sans-serif]">
      <MenuBar />

      <div className="flex flex-col h-[1651px] shrink-0 overflow-hidden rounded-t-[20px] rounded-b-[24px] border-t border-black">
        {/* tab strip */}
        <div className="flex h-[84px] shrink-0 items-end border-t-2 border-[#8f4a66] bg-[#5a1835]">
          <div className="flex w-[187px] h-full shrink-0 gap-[16px] pl-[42px] pt-[29px]">
            <span className="w-[24px] h-[24px] rounded-full bg-[#f06d62]" />
            <span className="w-[24px] h-[24px] rounded-full bg-[#f5bd4f]" />
            <span className="w-[24px] h-[24px] rounded-full bg-[#5fc552]" />
          </div>
          {tabs.map((t, i) => (
            <Tab key={i} {...t} />
          ))}
          <div className="flex h-[68px] flex-1 items-center justify-between pl-[30px] pr-[31px]">
            <Plus className="w-[30px] h-[30px] text-white" strokeWidth={2.6} />
            <ChevronDown className="w-[26px] h-[26px] text-white" strokeWidth={2.4} />
          </div>
        </div>

        {/* toolbar */}
        <div className="flex h-[64px] shrink-0 items-center bg-[#90254f] pt-[8px] pl-[27px]">
          <ArrowLeft className="w-[34px] h-[34px] text-white" strokeWidth={2} />
          <ArrowRight className="ml-[30px] w-[34px] h-[34px] text-[#c07f99]" strokeWidth={2} />
          <RotateCw className="ml-[32px] w-[30px] h-[30px] text-white" strokeWidth={2.2} />
          <div className="ml-[29px] flex w-[2263px] h-[56px] shrink-0 items-center rounded-full bg-[#71223f] pl-[27px]">
            <Lock className="w-[20px] h-[22px] text-[#c8b4bd] fill-[#c8b4bd]" strokeWidth={2} />
            <span className="ml-[20px] text-[27.8px] leading-none whitespace-nowrap text-white">
              webpages.charlotte.edu<span className="text-[#c9a7b5]">/jvanstor/project/</span>
            </span>
            <Share className="ml-auto w-[28px] h-[30px] text-[#c8b4bd]" strokeWidth={2} />
            <Star className="ml-[34px] mr-[20px] w-[30px] h-[30px] text-[#c8b4bd]" strokeWidth={2} />
          </div>
          <svg viewBox="0 0 30 30" className="ml-[30px] w-[30px] h-[30px]">
            <path d="M11 3a4 4 0 0 1 8 0v3h7a2 2 0 0 1 2 2v6h-3a4 4 0 0 0 0 8h3v5a2 2 0 0 1-2 2H4a2 2 0 0 1-2-2v-6h2a4 4 0 0 0 0-8H2V8a2 2 0 0 1 2-2h7z" fill="#fff" />
          </svg>
          <div className="ml-[34px] w-[28px] h-[28px] border-[3px] border-r-[9px] border-white" />
          <div className="ml-[28px] flex w-[44px] h-[44px] items-center justify-center rounded-full bg-[#3d8a7c] text-[20px] text-white">I</div>
          <div className="ml-[15px] flex w-[174px] h-[56px] items-center justify-between rounded-full border-2 border-[#ecc6d2] bg-[#9e2f58] pl-[24px] pr-[21px] text-[26px] text-[#f3ccd9]">
            Update
            <span className="flex flex-col gap-[4px]">
              <span className="w-[6px] h-[6px] rounded-full bg-[#f3ccd9]" />
              <span className="w-[6px] h-[6px] rounded-full bg-[#f3ccd9]" />
              <span className="w-[6px] h-[6px] rounded-full bg-[#f3ccd9]" />
            </span>
          </div>
        </div>

        {/* bookmarks bar */}
        <div className="flex h-[74px] shrink-0 items-center border-b-2 border-[#a5486f] bg-[#90254f] text-[23.4px] text-white">
          {bookmarks.map((b, i) => (
            <div key={i} className={`flex items-center gap-[17px] ${b.ml}`}>
              <div className="flex shrink-0 items-center justify-center">{b.icon}</div>
              {b.label && <span className="whitespace-nowrap">{b.label}</span>}
            </div>
          ))}
        </div>

        {/* page */}
        <main className={`flex flex-1 flex-col bg-[linear-gradient(#f6c0cc,#e072e8_50%,#fff)] text-black ${serif}`}>
          <nav className="pl-[16px] pt-[16px] text-[32px] leading-[37px] text-[#6e0f80]">
            Home <span className="text-[#7d7d7d]">|</span> Photos <span className="text-[#7d7d7d]">|</span> Qualifications{" "}
            <span className="text-[#7d7d7d]">|</span> Education <span className="text-[#7d7d7d]">|</span> About Me
          </nav>
          <h1 className="mt-[98px] text-center text-[149.7px] font-bold leading-[177px]">Rebekah Vanstory</h1>
          <h3 className="ml-[443px] mt-[284px] text-[37.44px] font-bold leading-[43px]">Rebekah Vanstory's Online Portfolio</h3>
          <p className="ml-[463px] mt-[108px] text-[32px] leading-[37px]">
            This website is a portfolio for Rebekah Vanstory. A student at UNCC and is currently applying to PA schools.
          </p>
          <div className="mt-auto h-[60px] bg-[linear-gradient(transparent,rgba(0,0,0,0.11))]" />
        </main>
      </div>

      {/* dock */}
      <div className="mx-[48px] mt-[6px] flex h-[83px] shrink-0 items-start rounded-[24px] border-2 border-[#4b4240] bg-[#2a211f] pl-[4px] pt-[12px]">
        {dockLeft.map((d) => (
          <DockCell key={d.name} dot={d.dot} badge={d.badge}>
            {d.icon}
          </DockCell>
        ))}
        <div className="mx-[17px] -mt-[4px] w-[1px] h-[64px] bg-[#6a6260]" />
        {dockRight.map((d) => (
          <DockCell key={d.name} dot>
            {d.icon}
          </DockCell>
        ))}
        <div className="ml-[17px] mr-[13px] -mt-[4px] w-[1px] h-[64px] bg-[#6a6260]" />
        <DockCell>
          <PhotoThumb paper="#b8b4a6" />
        </DockCell>
        <DockCell>
          <PhotoThumb paper="#9fb8b0" />
        </DockCell>
        <DockCell>
          <CodeThumb />
        </DockCell>
        <DockCell>
          <Trash />
        </DockCell>
      </div>
    </div>
  );
}
